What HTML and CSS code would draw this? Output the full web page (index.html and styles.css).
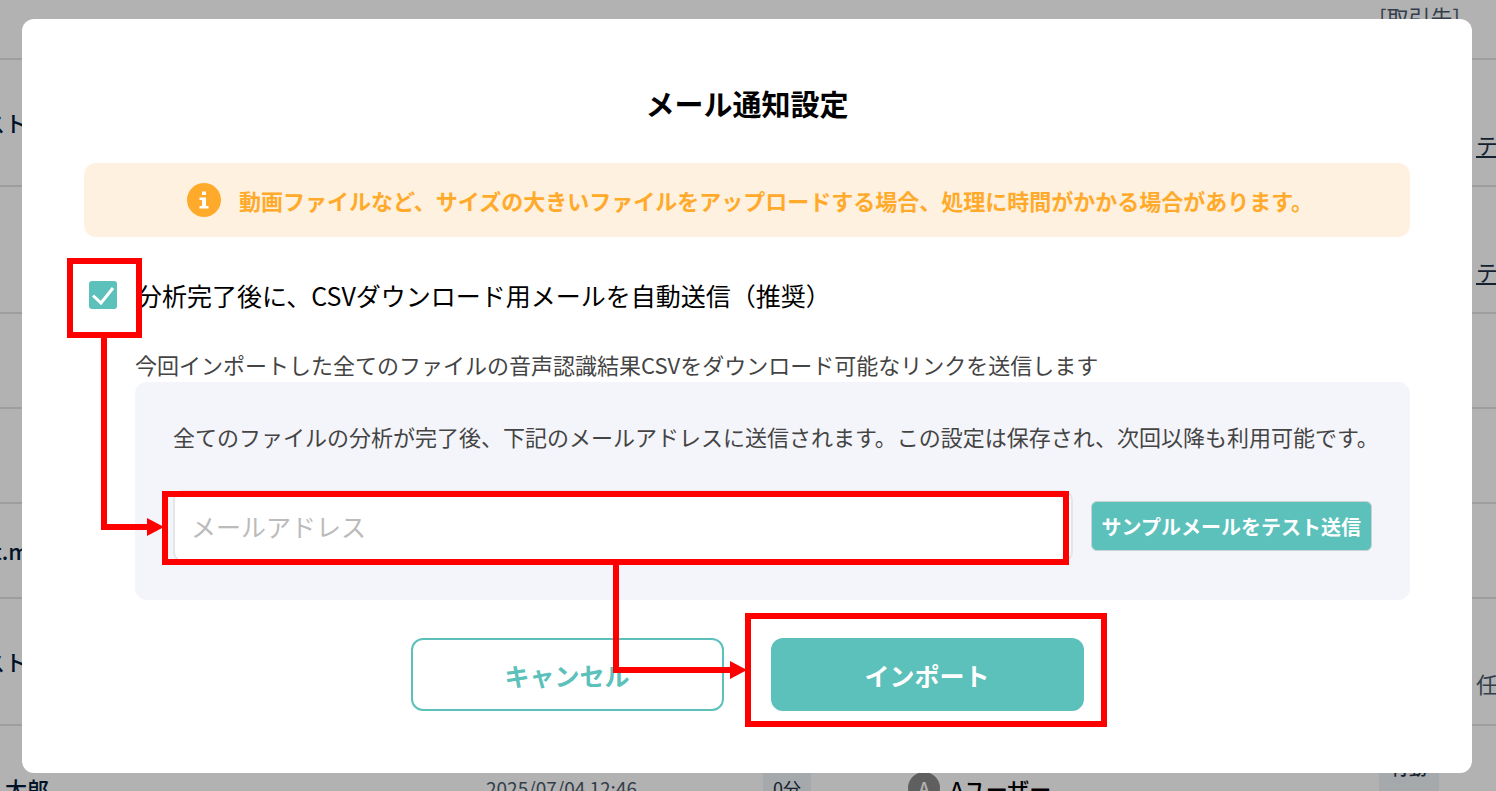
FILE: index.html
```html
<!DOCTYPE html>
<html lang="ja">
<head>
    <meta charset="UTF-8">
    <title>メール通知設定</title>
    <link rel="stylesheet" href="styles.css">
</head>
<body>
    <table class="list">
        <colgroup>
            <col class="col-name">
            <col class="col-date">
            <col class="col-time">
            <col class="col-user">
            <col class="col-tag">
            <col>
        </colgroup>
        <tr class="row-head"><td></td><td></td><td></td><td></td><td class="company">[取引先]</td><td></td></tr>
        <tr class="row-tall"><td class="name">スト</td><td></td><td></td><td></td><td></td><td class="second"><a href="#">テスト</a></td></tr>
        <tr class="row-tall"><td></td><td></td><td></td><td></td><td></td><td class="second"><a href="#">テスト</a></td></tr>
        <tr><td></td><td></td><td></td><td></td><td></td><td></td></tr>
        <tr><td></td><td></td><td></td><td></td><td></td><td></td></tr>
        <tr><td class="name">st.mp4</td><td></td><td></td><td></td><td></td><td></td></tr>
        <tr class="row-tall"><td class="name">スト</td><td></td><td></td><td></td><td></td><td class="second company">任意</td></tr>
        <tr class="row-tall">
            <td class="name">&emsp;太郎</td>
            <td class="date">2025/07/04 12:46</td>
            <td><span class="tag">0分</span></td>
            <td><div class="user"><span class="avatar">A</span>Aユーザー</div></td>
            <td><span class="tag tag-action">行動</span></td>
            <td></td>
        </tr>
    </table>

    <div class="overlay">
        <form class="modal" role="dialog" aria-labelledby="modalTitle">
            <h1 id="modalTitle">メール通知設定</h1>

            <div class="notice">
                <svg class="notice-icon" viewBox="0 0 34 34" aria-hidden="true">
                    <circle cx="17" cy="17" r="17" fill="#ffaa2b"/>
                    <path d="M15 8.5h4v3.5h-4zM12.5 14.5H19V23h2.500v2.500h-9V23H15v-6h-2.500z" fill="#fff"/>
                </svg>
                <p>動画ファイルなど、サイズの大きいファイルをアップロードする場合、処理に時間がかかる場合があります。</p>
            </div>

            <div class="check-row">
                <span class="check-wrap">
                    <input type="checkbox" id="autoSend" checked>
                    <svg class="check-mark" viewBox="0 0 28 28" aria-hidden="true">
                        <path d="M4 14.500l8 7.500L24 7" fill="none" stroke="#fff" stroke-width="3"/>
                    </svg>
                    <span class="mark mark-check"></span>
                </span>
                <label for="autoSend">分析完了後に、CSVダウンロード用メールを自動送信（推奨）</label>
            </div>

            <div class="detail">
                <p>今回インポートした全てのファイルの音声認識結果CSVをダウンロード可能なリンクを送信します</p>
                <div class="panel">
                    <p>全てのファイルの分析が完了後、下記のメールアドレスに送信されます。この設定は保存され、次回以降も利用可能です。</p>
                    <div class="mail-row">
                        <div class="mail-wrap">
                            <input type="email" class="mail" placeholder="メールアドレス" aria-label="メールアドレス">
                            <span class="mark mark-mail"></span>
                            <svg class="arrow arrow-mail" width="64" height="200" aria-hidden="true">
                                <path d="M3 0v190h45" fill="none" stroke="#f00" stroke-width="6"/>
                                <path d="M46 181l17 9-17 9z" fill="#f00"/>
                            </svg>
                        </div>
                        <button type="button" class="btn-test">サンプルメールをテスト送信</button>
                    </div>
                </div>
            </div>

            <div class="actions">
                <button type="button" class="btn btn-cancel">キャンセル</button>
                <div class="import-wrap">
                    <button type="submit" class="btn btn-import">インポート</button>
                    <span class="mark mark-import"></span>
                    <svg class="arrow arrow-import" width="134" height="116" aria-hidden="true">
                        <path d="M3 0v105h116" fill="none" stroke="#f00" stroke-width="6"/>
                        <path d="M117 96l17 9-17 9z" fill="#f00"/>
                    </svg>
                </div>
            </div>
        </form>
    </div>
</body>
</html>
```

FILE: styles.css
```css
* {
    box-sizing: border-box;
}
body {
    margin: 0;
    height: 100vh;
    overflow: hidden;
    font-family: "Noto Sans CJK JP", sans-serif;
    font-size: 22px;
    line-height: 32px;
    color: #000;
    background-color: #fff;
}
h1, p {
    margin: 0;
}
input, button {
    font-family: inherit;
}

/* list behind the dialog, scrolled a little to the right */
.list {
    width: calc(100% + 60px);
    margin-left: -17px;
    table-layout: fixed;
    border-collapse: collapse;
}
.list td {
    height: 95px;
    padding: 0 0 2px;
    border-bottom: 2px solid #e3e3e3;
    white-space: nowrap;
}
.list .row-head td {
    height: 59px;
    padding-bottom: 26px;
}
.list .row-tall td {
    height: 127px;
}
.list .name {
    font-weight: 500;
    color: #001a3a;
}
.list .company {
    color: #4a5a6c;
}
.list .date {
    font-size: 19px;
    color: #4a5a6c;
}
.list .second {
    padding-top: 44px;
}
.list a {
    color: #1d3044;
}
.col-name { width: 503px; }
.col-date { width: 277px; }
.col-time { width: 145px; }
.col-user { width: 471px; }
.col-tag { width: 97px; }
.tag {
    display: inline-block;
    padding: 8px 10px;
    font-size: 18px;
    color: #22303e;
    background-color: #eef2f6;
}
.tag-action {
    padding: 0 12px 44px;
    font-weight: 500;
}
.user {
    display: flex;
    align-items: center;
    gap: 10px;
    font-weight: 500;
}
.avatar {
    width: 32px;
    height: 32px;
    border-radius: 50%;
    background-color: #888;
    color: #fff;
    font-size: 18px;
    text-align: center;
}

.overlay {
    position: fixed;
    inset: 0;
    padding: 19px 24px 18px 22px;
    background-color: rgba(0, 0, 0, 0.3);
}
.modal {
    padding: 64px 62px 62px;
    border-radius: 12px;
    background-color: #fff;
}
.modal h1 {
    font-size: 29px;
    line-height: 40px;
    font-weight: 700;
    text-align: center;
}
.notice {
    display: flex;
    justify-content: center;
    align-items: center;
    gap: 18px;
    margin-top: 40px;
    padding: 20px 16px 20px 22px;
    border-radius: 12px;
    background-color: #fff1df;
    color: #ffaa2b;
    font-weight: 700;
}
.notice-icon {
    flex: none;
    width: 34px;
    height: 34px;
}

.check-row {
    display: flex;
    align-items: center;
    gap: 20px;
    margin-top: 40px;
    padding-left: 5px;
    font-size: 25px;
    line-height: 36px;
}
.check-wrap {
    position: relative;
    display: flex;
}
.check-wrap input {
    appearance: none;
    width: 28px;
    height: 28px;
    margin: 0;
    border-radius: 3px;
    background-color: #5cc0bb;
}
.check-mark {
    position: absolute;
    inset: 0;
    pointer-events: none;
}
.detail {
    margin: 35px 0 0 51px;
    color: #444;
}
.panel {
    margin-top: 2px;
    padding: 38px;
    border-radius: 12px;
    background-color: #f4f5fa;
}
.panel p {
    white-space: nowrap;
}
.mail-row {
    display: flex;
    align-items: center;
    gap: 18px;
    margin-top: 38px;
}
.mail-wrap {
    position: relative;
    flex: 1;
    display: flex;
}
.mail {
    width: 100%;
    height: 72px;
    padding: 0 16px;
    border: 2px solid #e4e5e9;
    border-radius: 10px;
    font-size: 25px;
    background-color: #fff;
}
.mail::placeholder {
    color: #bbb;
}
.btn-test {
    height: 50px;
    padding: 0 10px;
    border: 1px solid #c9d3d4;
    border-radius: 6px;
    background-color: #5cc0bb;
    color: #fff;
    font-size: 20px;
    font-weight: 700;
}
.actions {
    display: flex;
    justify-content: center;
    gap: 47px;
    margin-top: 38px;
}
.btn {
    width: 313px;
    height: 73px;
    border: 2px solid #5cc0bb;
    border-radius: 12px;
    font-size: 25px;
    font-weight: 700;
}
.btn-cancel {
    background-color: #fff;
    color: #5cc0bb;
}
.btn-import {
    background-color: #5cc0bb;
    color: #fff;
}
.import-wrap {
    position: relative;
}

/* red guide frames and arrows */
.mark, .arrow {
    position: absolute;
    pointer-events: none;
}
.mark {
    border: 6px solid #f00;
}
.mark-check {
    inset: -23px -25px -29px -22px;
}
.mark-mail {
    inset: 1px 4px -3px -11px;
}
.mark-import {
    inset: -25px -23px -16px -26px;
}
.arrow-mail {
    left: -72px;
    top: -153px;
}
.arrow-import {
    left: -158px;
    top: -73px;
}
```
